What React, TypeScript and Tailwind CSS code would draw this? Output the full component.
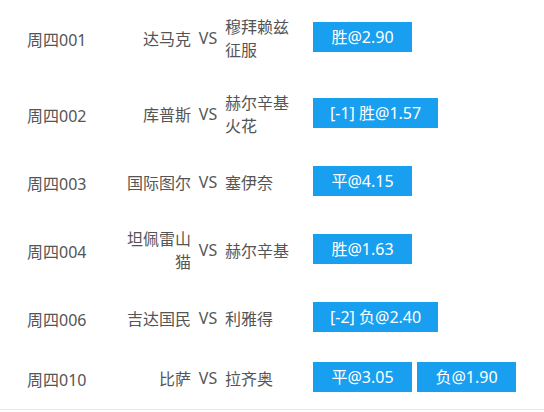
type Match = {
  no: string;
  home: string;
  away: string;
  picks: string[];
};

const matches: Match[] = [
  { no: "周四001", home: "达马克", away: "穆拜赖兹征服", picks: ["胜@2.90"] },
  { no: "周四002", home: "库普斯", away: "赫尔辛基火花", picks: ["[-1] 胜@1.57"] },
  { no: "周四003", home: "国际图尔", away: "塞伊奈", picks: ["平@4.15"] },
  { no: "周四004", home: "坦佩雷山猫", away: "赫尔辛基", picks: ["胜@1.63"] },
  { no: "周四006", home: "吉达国民", away: "利雅得", picks: ["[-2] 负@2.40"] },
  { no: "周四010", home: "比萨", away: "拉齐奥", picks: ["平@3.05", "负@1.90"] },
];

export default function App() {
  return (
    <div
      className="w-[544px] bg-white text-[16px] leading-[23px] text-[#555]"
      style={{ fontFamily: '"Noto Sans", "Noto Sans CJK SC", sans-serif' }}
    >
      <div className="border-b border-[#e6e6e6] pb-[1px]">
        {matches.map((m) => (
          <div key={m.no} className="flex items-center py-[15px]">
            <div className="w-[119px] shrink-0 translate-y-[2px] pl-[27px]">{m.no}</div>
            <div className="w-[72px] shrink-0 translate-y-[1px] text-right">{m.home}</div>
            <div className="w-[34px] shrink-0 text-center">VS</div>
            <div className="w-[72px] shrink-0 translate-y-[1px]">{m.away}</div>
            <div className="ml-[16px] flex -translate-y-[1px] gap-[5px]">
              {m.picks.map((p) => (
                <span
                  key={p}
                  className="flex h-[30px] min-w-[99px] items-center justify-center bg-[#199ff0] px-[17px] text-white"
                >
                  {p}
                </span>
              ))}
            </div>
          </div>
        ))}
      </div>
    </div>
  );
}
